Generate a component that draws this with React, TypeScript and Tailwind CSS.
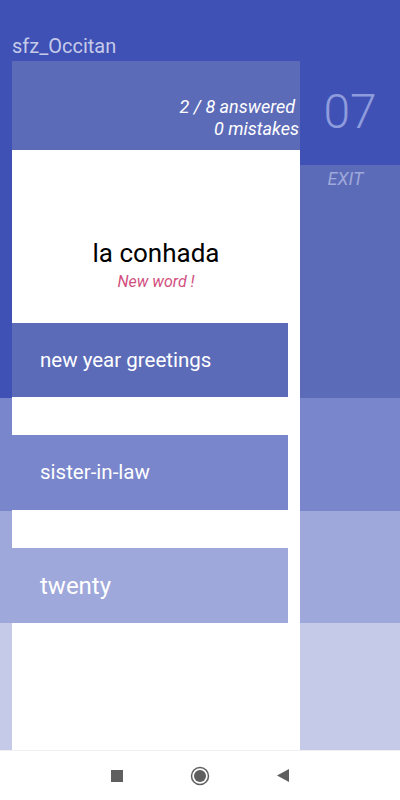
const bands = {
  dark: 'bg-[#3f51b5]',
  mid: 'bg-[#5c6bb8]',
  light: 'bg-[#7986cb]',
  lighter: 'bg-[#9fa8da]',
  lightest: 'bg-[#c5cae9]',
};

function NavBar() {
  return (
    <div className="h-[50px] bg-white border-t border-[#f0f0f0] flex items-center justify-center gap-[59px]">
      <div className="w-[24px] flex justify-center">
        <div className="w-[12px] h-[12px] bg-[#5f5f5f]" />
      </div>
      <div className="w-[24px] flex justify-center">
        <svg width="20" height="20" viewBox="0 0 20 20">
          <circle cx="10" cy="10" r="8.5" fill="none" stroke="#5f5f5f" strokeWidth="1.5" />
          <circle cx="10" cy="10" r="6" fill="#5f5f5f" />
        </svg>
      </div>
      <div className="w-[24px] flex justify-center">
        <svg width="12" height="13" viewBox="0 0 12 13">
          <polygon points="0,6.5 12,0 12,13" fill="#5f5f5f" />
        </svg>
      </div>
    </div>
  );
}

export default function App() {
  return (
    <div className="w-[400px] h-[800px] flex flex-col font-['Roboto',sans-serif]">
      <div className="flex h-[750px]">
        {/* left: title + card */}
        <div className="w-[300px] flex flex-col">
          <div className={`h-[61px] shrink-0 ${bands.dark} pl-[12px] pt-[33px] text-[20px] leading-[26px] text-[#c5cae9]`}>
            sfz_Occitan
          </div>
          <div className="flex flex-1">
            <div className="w-[12px] flex flex-col">
              <div className={`h-[337px] ${bands.dark}`} />
              <div className={`h-[113px] ${bands.light}`} />
              <div className={`h-[112px] ${bands.lighter}`} />
              <div className={`flex-1 ${bands.lightest}`} />
            </div>
            <div className="w-[288px] flex flex-col bg-white">
              <div className={`h-[89px] shrink-0 ${bands.mid} flex flex-col items-end justify-end pb-[10px] pr-[1px] text-white italic text-[18px] leading-[22px]`}>
                <span className="mr-[4px]">2 / 8 answered</span>
                <span>0 mistakes</span>
              </div>
              <div className="h-[173px] shrink-0 flex flex-col items-center pt-[88px]">
                <span className="text-[26px] leading-[30px] text-black">la conhada</span>
                <span className="mt-[4px] text-[16px] leading-[20px] italic text-[#d1507f]">New word !</span>
              </div>
              <div className={`h-[74px] shrink-0 mr-[12px] ${bands.mid} flex items-center pl-[28px] text-white text-[20.5px]`}>
                new year greetings
              </div>
              <div className="h-[38px] shrink-0" />
              <div className={`h-[75px] shrink-0 mr-[12px] ${bands.light} flex items-center pl-[28px] text-white text-[20.5px]`}>
                sister-in-law
              </div>
              <div className="h-[38px] shrink-0" />
              <div className={`h-[75px] shrink-0 mr-[12px] ${bands.lighter} flex items-center pl-[28px] text-white text-[24px]`}>
                twenty
              </div>
            </div>
          </div>
        </div>
        {/* right: counter + exit */}
        <div className="w-[100px] flex flex-col">
          <div className={`h-[165px] shrink-0 ${bands.dark} pt-[88px] text-center text-[48px] leading-[48px] font-light text-[#8e9bdc]`}>
            07
          </div>
          <div className={`h-[233px] shrink-0 ${bands.mid} pt-[2px] pr-[9px] text-center italic text-[18px] leading-[24px] text-[#9fa8da]`}>
            EXIT
          </div>
          <div className={`h-[113px] shrink-0 ${bands.light}`} />
          <div className={`h-[112px] shrink-0 ${bands.lighter}`} />
          <div className={`flex-1 ${bands.lightest}`} />
        </div>
      </div>
      <NavBar />
    </div>
  );
}
